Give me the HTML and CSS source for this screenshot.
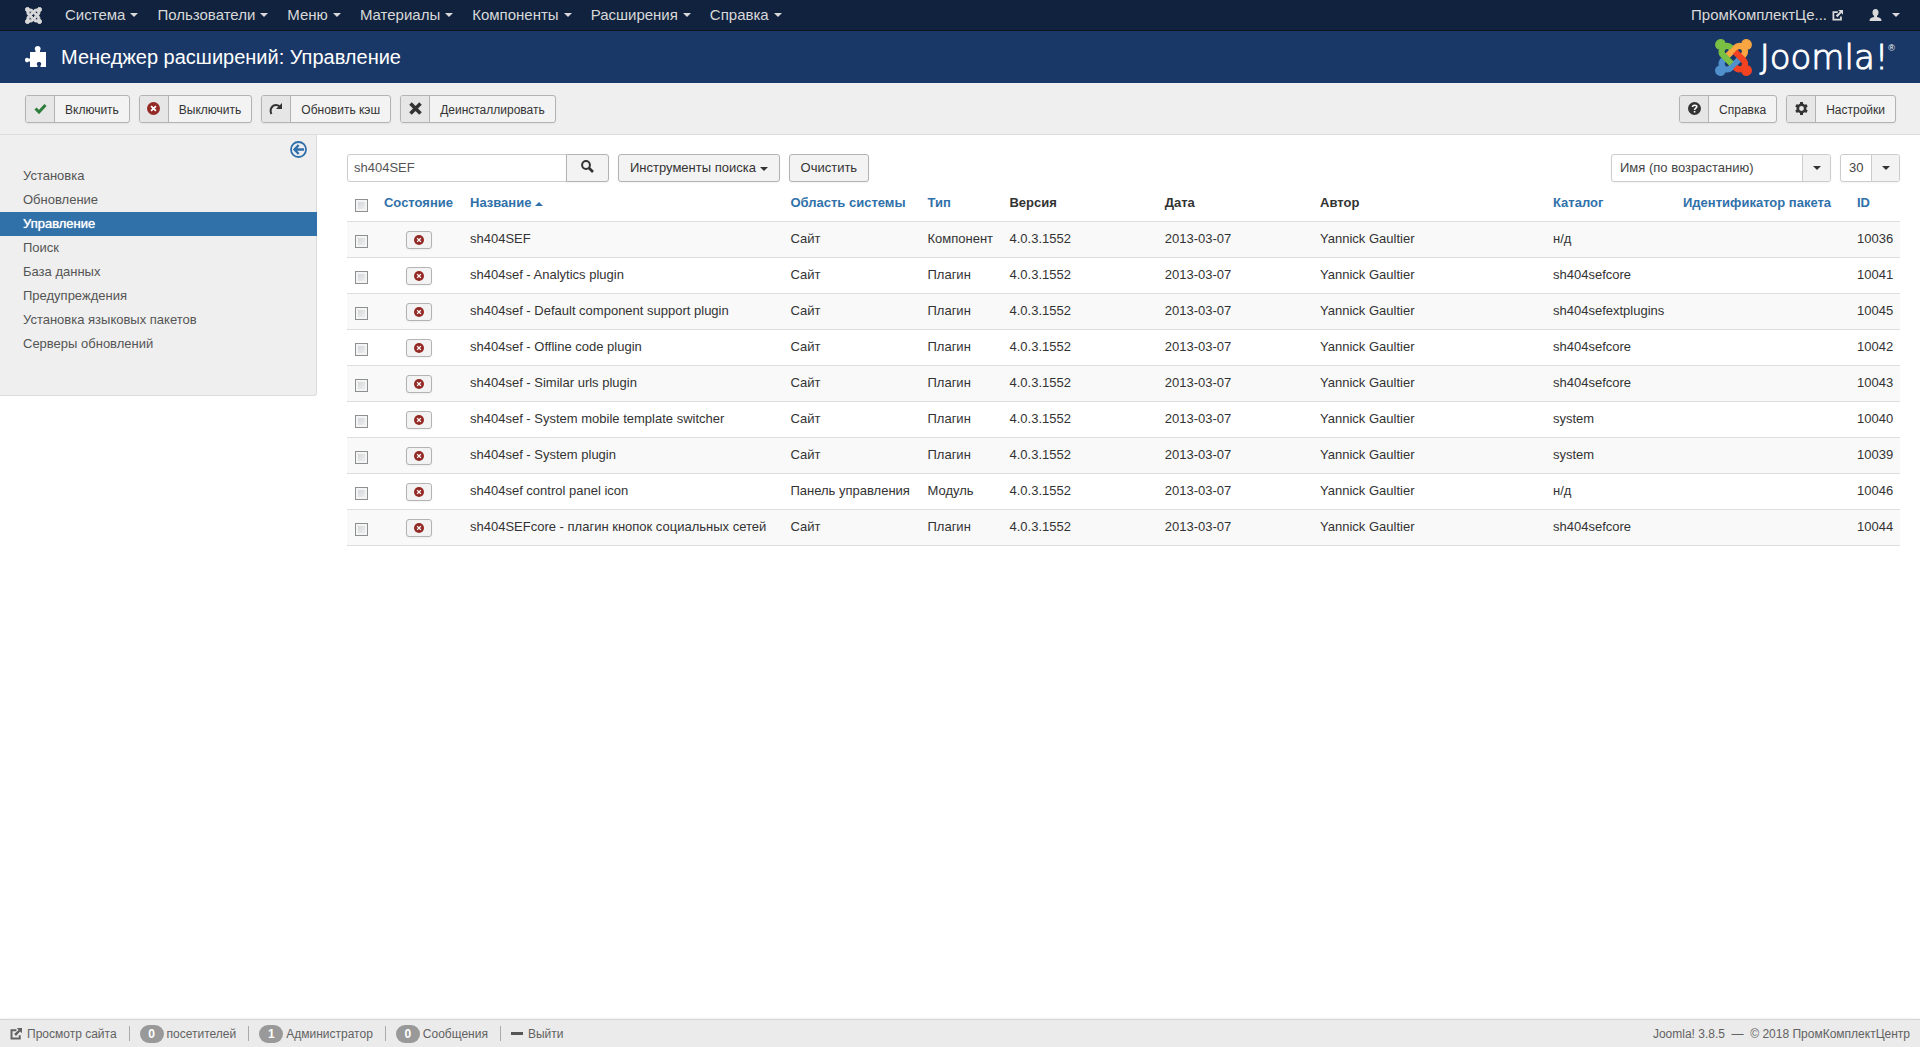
FILE: index.html
```html
<!DOCTYPE html>
<html lang="ru">
<head>
    <meta charset="UTF-8">
    <meta name="viewport" content="width=device-width, initial-scale=1.0">
    <title>Менеджер расширений: Управление</title>
    <link rel="stylesheet" href="styles.css">
</head>
<body>
    <!-- Shared icons -->
    <svg class="sprite" aria-hidden="true">
        <symbol id="i-off" viewBox="0 0 16 16">
            <circle cx="8" cy="8" r="8" fill="#942a25"/>
            <path d="M5 5l6 6M11 5l-6 6" stroke="#fff" stroke-width="2.2"/>
        </symbol>
        <symbol id="i-out" viewBox="0 0 16 16">
            <path d="M8.5 3H2v11h11V9.5" fill="none" stroke="currentColor" stroke-width="2.6"/>
            <path d="M9 0h7v7l-2.5-2.5L8 10.5 5.5 8l6-5.5z" fill="currentColor"/>
        </symbol>
    </svg>

    <nav class="navbar">
        <a href="#" class="nav-logo" aria-label="Joomla">
            <svg width="17" height="17" viewBox="-8 24 464 464" fill="#d9d9d9" stroke="#d9d9d9" stroke-width="24"><path d="M.6 92.1C.6 58.8 27.4 32 60.4 32c30 0 54.5 21.9 59.2 50.2 32.6-7.6 67.1.6 96.5 30l-44.3 44.3c-20.5-20.5-42.6-16.3-55.4-3.5-14.3 14.3-14.3 37.9 0 52.2l99.5 99.5-44 44.3c-87.7-87.2-49.7-49.7-99.8-99.7-26.8-26.5-35-64.8-24.8-98.9C20.4 144.6.6 120.7.6 92.1zm129.5 116.4l44.3 44.3c10-10 89.7-89.7 99.7-99.8 14.3-14.3 37.6-14.3 51.9 0 12.8 12.8 17 35-3.5 55.4l44 44.3c31.2-31.2 38.5-67.6 28.9-101.2 29.2-4.1 51.9-29.2 51.9-59.5 0-33.2-26.8-60.1-59.8-60.1-30.3 0-55.4 22.5-59.5 51.6-33.8-9.9-71.7-1.5-98.3 25.1-18.3 19.1-71.1 71.5-99.6 99.9zm266.3 152.2c8.2-32.7-.9-68.5-26.3-93.9-11.8-12.2 5 4.7-99.5-99.7l-44.3 44.3 99.7 99.7c14.3 14.3 14.3 37.6 0 51.9-12.8 12.8-35 17-55.4-3.5l-44 44.3c27.6 30.2 68 38.8 102.7 28 5.5 27.4 29.7 48.1 58.9 48.1 33 0 59.8-26.8 59.8-60.1 0-30.2-22.5-55-51.6-59.1zm-84.3-53.1l-44-44.3c-87 86.4-50.4 50.4-99.7 99.8-14.3 14.3-37.6 14.3-51.9 0-13.1-13.4-16.9-35.3 3.2-55.4l-44-44.3c-30.2 30.2-38 65.2-29.5 98.3-26.7 6-46.2 29.9-46.2 58.2C0 453.2 26.8 480 59.8 480c28.6 0 52.5-19.8 58.6-46.7 32.7 8.2 68.5-.6 94.2-26 32.1-32 12.2-12.4 99.5-99.7z"/></svg>
        </a>
        <a href="#" class="nav-item">Система<span class="caret"></span></a>
        <a href="#" class="nav-item">Пользователи<span class="caret"></span></a>
        <a href="#" class="nav-item">Меню<span class="caret"></span></a>
        <a href="#" class="nav-item">Материалы<span class="caret"></span></a>
        <a href="#" class="nav-item">Компоненты<span class="caret"></span></a>
        <a href="#" class="nav-item">Расширения<span class="caret"></span></a>
        <a href="#" class="nav-item">Справка<span class="caret"></span></a>
        <div class="nav-right">
            <a href="#" class="nav-item">ПромКомплектЦе... <svg width="11" height="11"><use href="#i-out"/></svg></a>
            <a href="#" class="nav-item nav-user" aria-label="Пользователь">
                <svg width="13" height="12" viewBox="0 0 13 12" fill="currentColor"><ellipse cx="6.5" cy="3.5" rx="3" ry="3.5"/><path d="M5 6h3v2c3 .8 4.5 1.3 4.5 4H.5C.5 9.3 2 8.8 5 8z"/></svg>
                <span class="caret"></span>
            </a>
        </div>
    </nav>

    <header class="header">
        <svg width="22" height="22" viewBox="0 0 22 22" fill="#fff"><path d="M5 6h5.5V4.5C9 3 10 0 12.7 0s3.8 3 2.3 4.5V6h6v15h-5.5v-1.5c1.5-1.5.5-3.5-1.5-3.5s-3 2-1.5 3.5V21H5v-5.5H3.5C2.5 17 0 16.5 0 14s2.5-3 3.5-1.5H5z"/></svg>
        <h1>Менеджер расширений: Управление</h1>
        <a href="#" class="brand">
            <svg width="37" height="37" viewBox="-8 24 464 464" stroke-width="14">
                <path fill="#5091cd" stroke="#5091cd" d="M312.1 307.6l-44-44.3c-87 86.4-50.4 50.4-99.7 99.8-14.3 14.3-37.6 14.3-51.9 0-13.1-13.4-16.9-35.3 3.2-55.4l-44-44.3c-30.2 30.2-38 65.2-29.5 98.3-26.7 6-46.2 29.9-46.2 58.2C0 453.2 26.8 480 59.8 480c28.6 0 52.5-19.8 58.6-46.7 32.7 8.2 68.5-.6 94.2-26 32.1-32 12.2-12.4 99.5-99.7z"/>
                <path fill="#f9a541" stroke="#f9a541" d="M130.1 208.5l44.3 44.3c10-10 89.7-89.7 99.7-99.8 14.3-14.3 37.6-14.3 51.9 0 12.8 12.8 17 35-3.5 55.4l44 44.3c31.2-31.2 38.5-67.6 28.9-101.2 29.2-4.1 51.9-29.2 51.9-59.5 0-33.2-26.8-60.1-59.8-60.1-30.3 0-55.4 22.5-59.5 51.6-33.8-9.9-71.7-1.5-98.3 25.1-18.3 19.1-71.1 71.5-99.6 99.9z"/>
                <path fill="#f44321" stroke="#f44321" d="M396.4 360.7c8.2-32.7-.9-68.5-26.3-93.9-11.8-12.2 5 4.7-99.5-99.7l-44.3 44.3 99.7 99.7c14.3 14.3 14.3 37.6 0 51.9-12.8 12.8-35 17-55.4-3.5l-44 44.3c27.6 30.2 68 38.8 102.7 28 5.5 27.4 29.7 48.1 58.9 48.1 33 0 59.8-26.8 59.8-60.1 0-30.2-22.5-55-51.6-59.1z"/>
                <path fill="#7ac143" stroke="#7ac143" d="M.6 92.1C.6 58.8 27.4 32 60.4 32c30 0 54.5 21.9 59.2 50.2 32.6-7.6 67.1.6 96.5 30l-44.3 44.3c-20.5-20.5-42.6-16.3-55.4-3.5-14.3 14.3-14.3 37.9 0 52.2l99.5 99.5-44 44.3c-87.7-87.2-49.7-49.7-99.8-99.7-26.8-26.5-35-64.8-24.8-98.9C20.4 144.6.6 120.7.6 92.1z"/>
            </svg>
            <span class="brand-name">Joomla!</span><sup>®</sup>
        </a>
    </header>

    <div class="toolbar">
        <button class="btn tool-btn"><span class="tool-icon"><svg width="13" height="11" viewBox="0 0 13 11"><path d="M1.5 5.5l3.5 3.5L11.5 2" fill="none" stroke="#2f7d3a" stroke-width="3"/></svg></span><span class="tool-text">Включить</span></button>
        <button class="btn tool-btn"><span class="tool-icon"><svg width="13" height="13"><use href="#i-off"/></svg></span><span class="tool-text">Выключить</span></button>
        <button class="btn tool-btn"><span class="tool-icon"><svg width="14" height="12" viewBox="0 0 14 12"><path d="M2.5 11C0 6 3.5 2 7 2c2 0 3.5 1 4.5 2.5" fill="none" stroke="#333" stroke-width="2"/><path d="M13 0v6H7z" fill="#333"/></svg></span><span class="tool-text">Обновить кэш</span></button>
        <button class="btn tool-btn"><span class="tool-icon"><svg width="13" height="13" viewBox="0 0 13 13"><path d="M1.5 1.5l10 10M11.5 1.5l-10 10" stroke="#333" stroke-width="3.6"/></svg></span><span class="tool-text">Деинсталлировать</span></button>
        <div class="toolbar-right">
            <button class="btn tool-btn"><span class="tool-icon"><svg width="13" height="13" viewBox="0 0 13 13"><circle cx="6.5" cy="6.5" r="6.5" fill="#333"/><path d="M4.5 5c0-2.5 4.3-2.3 4.3-.2C8.8 6.3 6.6 6.1 6.6 8M6.6 9v1.6" fill="none" stroke="#fff" stroke-width="1.6"/></svg></span><span class="tool-text">Справка</span></button>
            <button class="btn tool-btn"><span class="tool-icon"><svg width="13" height="13" viewBox="0 0 13 13"><circle cx="6.5" cy="6.5" r="3.7" fill="none" stroke="#333" stroke-width="2.6"/><path d="M6.5 0v2.5M6.5 10.5V13M1 3.3l2 1.2M10 8.5l2 1.2M1 9.7l2-1.2M10 4.5l2-1.2" stroke="#333" stroke-width="3"/></svg></span><span class="tool-text">Настройки</span></button>
        </div>
    </div>

    <div class="container">
        <aside class="sidebar">
            <button class="toggle-btn" aria-label="Скрыть меню">
                <svg width="17" height="17" viewBox="0 0 17 17" fill="none" stroke="#2f6fab"><circle cx="8.5" cy="8.5" r="7.5" stroke-width="1.8"/><path d="M14 8.5H5M8.7 4L4.5 8.5 8.7 13" stroke-width="2.4"/></svg>
            </button>
            <ul class="submenu">
                <li><a href="#">Установка</a></li>
                <li><a href="#">Обновление</a></li>
                <li><a href="#" class="active">Управление</a></li>
                <li><a href="#">Поиск</a></li>
                <li><a href="#">База данных</a></li>
                <li><a href="#">Предупреждения</a></li>
                <li><a href="#">Установка языковых пакетов</a></li>
                <li><a href="#">Серверы обновлений</a></li>
            </ul>
        </aside>

        <main class="content">
            <form class="filters" onsubmit="return false">
                <div class="search">
                    <input type="text" class="search-input" value="sh404SEF" aria-label="Поиск">
                    <button class="btn search-btn" aria-label="Искать"><svg width="13" height="13" viewBox="0 0 13 13" fill="none" stroke="#333"><circle cx="5" cy="5" r="3.9" stroke-width="2"/><path d="M8 8l4 4" stroke-width="2.6"/></svg></button>
                </div>
                <button type="button" class="btn">Инструменты поиска <span class="caret"></span></button>
                <button type="button" class="btn">Очистить</button>
                <div class="filters-right">
                    <div class="select select-sort">
                        <select aria-label="Сортировка"><option>Имя (по возрастанию)</option></select>
                        <span class="select-arrow"><span class="caret"></span></span>
                    </div>
                    <div class="select select-limit">
                        <select aria-label="Количество"><option>30</option></select>
                        <span class="select-arrow"><span class="caret"></span></span>
                    </div>
                </div>
            </form>

            <table class="table">
                <thead>
                    <tr>
                        <th class="col-check"><input type="checkbox" aria-label="Выбрать все"></th>
                        <th class="col-state"><a href="#">Состояние</a></th>
                        <th><a href="#">Название<span class="caret caret-up"></span></a></th>
                        <th class="col-client"><a href="#">Область системы</a></th>
                        <th class="col-type"><a href="#">Тип</a></th>
                        <th class="col-date">Версия</th>
                        <th class="col-date">Дата</th>
                        <th class="col-author">Автор</th>
                        <th class="col-folder"><a href="#">Каталог</a></th>
                        <th class="col-package"><a href="#">Идентификатор пакета</a></th>
                        <th class="col-id"><a href="#">ID</a></th>
                    </tr>
                </thead>
                <tbody>
                    <tr>
                        <td><input type="checkbox" aria-label="Выбрать 10036"></td>
                        <td class="col-state"><button class="btn btn-micro" aria-label="Включить"><svg width="10" height="10"><use href="#i-off"/></svg></button></td>
                        <td>sh404SEF</td><td>Сайт</td><td>Компонент</td><td>4.0.3.1552</td><td>2013-03-07</td><td>Yannick Gaultier</td><td>н/д</td><td></td><td>10036</td>
                    </tr>
                    <tr>
                        <td><input type="checkbox" aria-label="Выбрать 10041"></td>
                        <td class="col-state"><button class="btn btn-micro" aria-label="Включить"><svg width="10" height="10"><use href="#i-off"/></svg></button></td>
                        <td>sh404sef - Analytics plugin</td><td>Сайт</td><td>Плагин</td><td>4.0.3.1552</td><td>2013-03-07</td><td>Yannick Gaultier</td><td>sh404sefcore</td><td></td><td>10041</td>
                    </tr>
                    <tr>
                        <td><input type="checkbox" aria-label="Выбрать 10045"></td>
                        <td class="col-state"><button class="btn btn-micro" aria-label="Включить"><svg width="10" height="10"><use href="#i-off"/></svg></button></td>
                        <td>sh404sef - Default component support plugin</td><td>Сайт</td><td>Плагин</td><td>4.0.3.1552</td><td>2013-03-07</td><td>Yannick Gaultier</td><td>sh404sefextplugins</td><td></td><td>10045</td>
                    </tr>
                    <tr>
                        <td><input type="checkbox" aria-label="Выбрать 10042"></td>
                        <td class="col-state"><button class="btn btn-micro" aria-label="Включить"><svg width="10" height="10"><use href="#i-off"/></svg></button></td>
                        <td>sh404sef - Offline code plugin</td><td>Сайт</td><td>Плагин</td><td>4.0.3.1552</td><td>2013-03-07</td><td>Yannick Gaultier</td><td>sh404sefcore</td><td></td><td>10042</td>
                    </tr>
                    <tr>
                        <td><input type="checkbox" aria-label="Выбрать 10043"></td>
                        <td class="col-state"><button class="btn btn-micro" aria-label="Включить"><svg width="10" height="10"><use href="#i-off"/></svg></button></td>
                        <td>sh404sef - Similar urls plugin</td><td>Сайт</td><td>Плагин</td><td>4.0.3.1552</td><td>2013-03-07</td><td>Yannick Gaultier</td><td>sh404sefcore</td><td></td><td>10043</td>
                    </tr>
                    <tr>
                        <td><input type="checkbox" aria-label="Выбрать 10040"></td>
                        <td class="col-state"><button class="btn btn-micro" aria-label="Включить"><svg width="10" height="10"><use href="#i-off"/></svg></button></td>
                        <td>sh404sef - System mobile template switcher</td><td>Сайт</td><td>Плагин</td><td>4.0.3.1552</td><td>2013-03-07</td><td>Yannick Gaultier</td><td>system</td><td></td><td>10040</td>
                    </tr>
                    <tr>
                        <td><input type="checkbox" aria-label="Выбрать 10039"></td>
                        <td class="col-state"><button class="btn btn-micro" aria-label="Включить"><svg width="10" height="10"><use href="#i-off"/></svg></button></td>
                        <td>sh404sef - System plugin</td><td>Сайт</td><td>Плагин</td><td>4.0.3.1552</td><td>2013-03-07</td><td>Yannick Gaultier</td><td>system</td><td></td><td>10039</td>
                    </tr>
                    <tr>
                        <td><input type="checkbox" aria-label="Выбрать 10046"></td>
                        <td class="col-state"><button class="btn btn-micro" aria-label="Включить"><svg width="10" height="10"><use href="#i-off"/></svg></button></td>
                        <td>sh404sef control panel icon</td><td>Панель управления</td><td>Модуль</td><td>4.0.3.1552</td><td>2013-03-07</td><td>Yannick Gaultier</td><td>н/д</td><td></td><td>10046</td>
                    </tr>
                    <tr>
                        <td><input type="checkbox" aria-label="Выбрать 10044"></td>
                        <td class="col-state"><button class="btn btn-micro" aria-label="Включить"><svg width="10" height="10"><use href="#i-off"/></svg></button></td>
                        <td>sh404SEFcore - плагин кнопок социальных сетей</td><td>Сайт</td><td>Плагин</td><td>4.0.3.1552</td><td>2013-03-07</td><td>Yannick Gaultier</td><td>sh404sefcore</td><td></td><td>10044</td>
                    </tr>
                </tbody>
            </table>
        </main>
    </div>

    <footer class="status">
        <a href="#" class="status-item"><svg width="12" height="12"><use href="#i-out"/></svg>Просмотр сайта</a>
        <span class="status-item status-count"><span class="badge">0</span>посетителей</span>
        <span class="status-item status-count"><span class="badge">1</span>Администратор</span>
        <a href="#" class="status-item status-count"><span class="badge">0</span>Сообщения</a>
        <a href="#" class="status-item status-last"><span class="minus"></span>Выйти</a>
        <span class="copyright">Joomla! 3.8.5 &nbsp;—&nbsp; © 2018 ПромКомплектЦентр</span>
    </footer>
</body>
</html>
```
FILE: styles.css
```css
* {
    box-sizing: border-box;
}
body {
    margin: 0;
    min-height: 100vh;
    display: flex;
    flex-direction: column;
    font-family: "Liberation Sans", Arial, sans-serif;
    font-size: 13px;
    line-height: 18px;
    color: #333;
    background: #fff;
}
a {
    color: #3071a9;
    text-decoration: none;
}
button, input, select {
    font-family: inherit;
    font-size: 13px;
    color: #333;
    margin: 0;
}
.sprite {
    position: absolute;
    width: 0;
    height: 0;
}
.caret {
    display: inline-block;
    border-top: 4px solid currentColor;
    border-left: 4px solid transparent;
    border-right: 4px solid transparent;
    vertical-align: middle;
}
.caret-up {
    border-top: none;
    border-bottom: 4px solid currentColor;
    margin-left: 4px;
}

/* Top menu */
.navbar {
    display: flex;
    align-items: center;
    height: 31px;
    padding: 0 10px 0 25px;
    background: #10223e;
    border-bottom: 1px solid #0d1420;
}
.nav-logo {
    display: flex;
    margin-right: 14px;
}
.nav-item {
    display: flex;
    align-items: center;
    gap: 5px;
    padding: 0 10px 0 9px;
    font-size: 15px;
    color: #d9d9d9;
}
.nav-right {
    display: flex;
    margin-left: auto;
}
.nav-user {
    gap: 10px;
    padding-left: 16px;
}

/* Page title */
.header {
    display: flex;
    align-items: center;
    height: 52px;
    padding: 0 25px;
    background: #1a3867;
}
.header h1 {
    margin: 0 0 0 14px;
    font-size: 20px;
    font-weight: normal;
    color: #fff;
}
.brand {
    display: flex;
    align-items: center;
    margin-left: auto;
    color: #fff;
}
.brand-name {
    margin-left: 8px;
    font-family: "DejaVu Sans Light", "DejaVu Sans", sans-serif;
    font-size: 34px;
    font-weight: 200;
    line-height: 36px;
    -webkit-text-stroke: 1px #fff;
}
.brand sup {
    align-self: flex-start;
    font-size: 9px;
}

/* Buttons */
.btn {
    height: 28px;
    padding: 0 11px;
    border: 1px solid #b3b3b3;
    border-radius: 3px;
    background: #f3f3f3;
    box-shadow: 0 1px 2px rgba(0,0,0,0.05);
    white-space: nowrap;
    cursor: pointer;
}
.btn:hover {
    background: #e6e6e6;
}
.toolbar {
    display: flex;
    align-items: center;
    gap: 9px;
    height: 52px;
    padding: 0 24px 0 25px;
    background: #efefef;
    border-bottom: 1px solid #ddd;
}
.toolbar-right {
    display: flex;
    gap: 9px;
    margin-left: auto;
}
.tool-btn {
    display: flex;
    padding: 0;
    font-size: 12px;
    overflow: hidden;
}
.tool-icon {
    display: flex;
    align-items: center;
    justify-content: center;
    width: 29px;
    height: 26px;
    background: #e6e6e6;
    border-right: 1px solid #b3b3b3;
}
.tool-text {
    padding: 0 10px;
    line-height: 28px;
}

.container {
    flex: 1;
    display: flex;
    align-items: flex-start;
}

/* Sidebar */
.sidebar {
    width: 317px;
    padding-bottom: 39px;
    background: #efefef;
    border-right: 1px solid #ddd;
    border-bottom: 1px solid #ddd;
    border-radius: 0 0 3px 0;
}
.toggle-btn {
    display: block;
    margin: 6px 9px 6px auto;
    padding: 0;
    width: 17px;
    height: 17px;
    border: none;
    background: none;
    cursor: pointer;
}
.submenu {
    margin: 0;
    padding: 0;
    list-style: none;
}
.submenu a {
    display: block;
    padding: 0 23px;
    line-height: 24px;
    color: #555;
}
.submenu a.active {
    margin-right: -1px;
    background: #3071a9;
    color: #fff;
    text-shadow: 0 0 1px #fff;
}

/* Filters */
.content {
    flex: 1;
    padding: 18px 20px 20px 30px;
}
.filters {
    display: flex;
    align-items: center;
    gap: 9px;
    height: 29px;
}
.search {
    display: flex;
}
.search-input {
    width: 220px;
    height: 28px;
    padding: 0 6px;
    border: 1px solid #ccc;
    border-radius: 3px 0 0 3px;
    color: #555;
    outline: none;
}
.search-btn {
    width: 43px;
    margin-left: -1px;
    border-radius: 0 3px 3px 0;
}
.filters-right {
    display: flex;
    gap: 9px;
    margin-left: auto;
}
.select {
    position: relative;
    height: 28px;
}
.select select {
    width: 100%;
    height: 28px;
    padding: 0 8px;
    border: 1px solid #ccc;
    border-radius: 3px;
    background: #fff;
    box-shadow: 0 1px 2px rgba(0,0,0,0.05);
    color: #444;
    appearance: none;
}
.select-sort {
    width: 220px;
}
.select-limit {
    width: 60px;
}
.select-arrow {
    position: absolute;
    top: 1px;
    right: 1px;
    bottom: 1px;
    width: 28px;
    display: flex;
    align-items: center;
    justify-content: center;
    background: #f3f3f3;
    border-left: 1px solid #ccc;
    border-radius: 0 2px 2px 0;
    pointer-events: none;
}

/* Extensions table */
.table {
    width: 100%;
    table-layout: fixed;
    border-collapse: collapse;
}
.table th, .table td {
    height: 36px;
    padding: 8px;
    text-align: left;
    vertical-align: top;
    white-space: nowrap;
    border-bottom: 1px solid #ddd;
}
.table th {
    height: 39px;
    padding-top: 12px;
}
.table tbody tr:nth-child(odd) {
    background: #f9f9f9;
}
.table input {
    display: block;
    appearance: none;
    width: 13px;
    height: 13px;
    margin-top: 5px;
    border: 1px solid #8e8f8f;
    background: linear-gradient(135deg, #cbcfd5, #f6f6f6);
    box-shadow: inset 0 0 0 2px #f4f4f4;
}
.table .col-state {
    width: 87px;
    text-align: center;
}
.col-check {
    width: 28px;
}
.col-client {
    width: 137px;
}
.col-type {
    width: 82px;
}
.col-date {
    width: 10%;
}
.col-author {
    width: 15%;
}
.col-folder {
    width: 130px;
}
.col-package {
    width: 174px;
}
.col-id {
    width: 51px;
}
.btn-micro {
    display: flex;
    align-items: center;
    justify-content: center;
    width: 26px;
    height: 18px;
    margin: 1px auto 0;
    padding: 0;
}

/* Status bar */
.status {
    display: flex;
    align-items: center;
    height: 28px;
    padding: 0 10px;
    background: #ebebeb;
    border-top: 1px solid #d4d4d4;
    box-shadow: 0 0 3px rgba(0,0,0,0.1);
    font-size: 12px;
    color: #626262;
}
.status-item {
    display: flex;
    align-items: center;
    gap: 5px;
    height: 15px;
    margin-right: 10px;
    padding-right: 12px;
    border-right: 1px solid #aaa;
    color: #626262;
}
.status-last {
    border-right: none;
}
.status-count {
    gap: 3px;
}
.badge {
    width: 24px;
    border-radius: 9px;
    background: #999;
    color: #fff;
    font-weight: bold;
    text-align: center;
}
.minus {
    width: 12px;
    height: 3px;
    background: #555;
}
.copyright {
    margin-left: auto;
}
```
